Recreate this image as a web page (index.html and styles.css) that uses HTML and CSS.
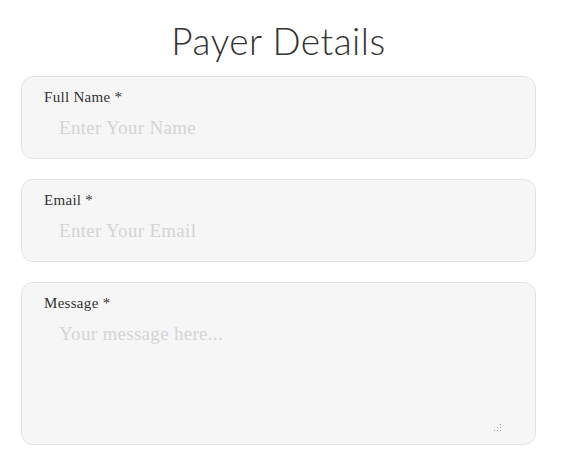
FILE: index.html
```html
<!DOCTYPE html>
<html lang="en">
<head>
    <meta charset="UTF-8">
    <meta name="viewport" content="width=device-width, initial-scale=1.0">
    <title>Payer Details</title>

    <link rel="stylesheet" href="styles.css">
</head>
<body>
    <div class="container">
        <h1 class="title">Payer Details</h1>
        <form class="payer-form">
            <div class="field">
                <label for="name">Full Name *</label>
                <input id="name" type="text" placeholder="Enter Your Name">
            </div>
            <div class="field">
                <label for="email">Email *</label>
                <input id="email" type="email" placeholder="Enter Your Email">
            </div>
            <div class="field field-message">
                <label for="message">Message *</label>
                <textarea id="message" placeholder="Your message here..."></textarea>
                <svg class="grip" width="10" height="10" viewBox="0 0 10 10">
                    <rect x="8" y="0" width="1" height="1" />
                    <rect x="8" y="3" width="1" height="1" />
                    <rect x="5" y="3" width="1" height="1" />
                    <rect x="8" y="6" width="1" height="1" />
                    <rect x="5" y="6" width="1" height="1" />
                    <rect x="2" y="6" width="1" height="1" />
                </svg>
            </div>
        </form>
    </div>
</body>
</html>
```

FILE: styles.css
```css
body {
    margin: 0;
    background-color: #fff;
    font-family: "Liberation Serif", serif;
    color: #333;
}
.container {
    width: 515px;
    padding: 0 0 0 21px;
}
.title {
    margin: 19px 0 13px;
    text-align: center;
    font-family: "Lato", sans-serif;
    font-weight: 300;
    font-size: 37px;
    line-height: 44px;
    letter-spacing: 0.5px;
    color: #333;
}
.payer-form {
    display: flex;
    flex-direction: column;
    gap: 20px;
}
.field {
    position: relative;
    display: flex;
    flex-direction: column;
    height: 81px;
    padding: 0 22px;
    background-color: #f6f6f6;
    border: 1px solid #e3e3e3;
    border-radius: 12px;
}
.field label {
    margin-top: 12px;
    font-size: 15px;
    line-height: 16px;
    letter-spacing: 0.3px;
    color: #333;
}
.field input,
.field textarea {
    margin-top: 12px;
    padding: 0 0 0 15px;
    border: 0;
    background: transparent;
    outline: none;
    font-family: "Liberation Serif", serif;
    font-size: 19px;
    line-height: 22px;
    letter-spacing: 0.3px;
    color: #333;
}
.field input::placeholder,
.field textarea::placeholder {
    color: #d4d4d4;
}
.field-message {
    height: 161px;
}
.field-message textarea {
    flex: 1;
    margin-bottom: 12px;
    resize: none;
}
.grip {
    position: absolute;
    right: 33px;
    bottom: 10px;
    fill: #9a9a9a;
}
```
